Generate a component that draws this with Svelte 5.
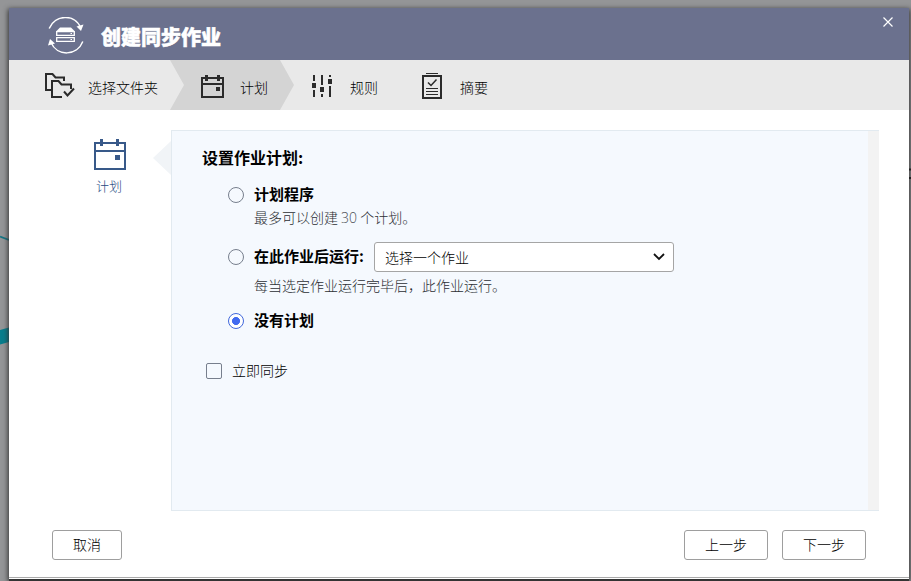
<script>
  const steps = [
    { id: "folder", label: "选择文件夹" },
    { id: "schedule", label: "计划" },
    { id: "rules", label: "规则" },
    { id: "summary", label: "摘要" }
  ];

  let current = "schedule";
  let plan = "none";
  let job = "";
  let syncNow = false;
</script>

<div class="desktop">
  <svg class="backdrop" width="9" height="581" viewBox="0 0 9 581">
    <path d="M0 236.500L9 240" stroke="#157584" stroke-width="1.800" />
    <path d="M0 330L9 327.500V342L0 344.500Z" fill="#087d8c" />
  </svg>
  <svg class="backdrop right" width="2" height="581" viewBox="0 0 2 581">
    <path d="M0 169.500H2M0 178H2" stroke="#222" stroke-width="2" />
  </svg>

  <div class="dialog">
    <header>
      <svg class="logo" width="36" height="38" viewBox="0 0 36 38" fill="none">
        <path d="M1.200 11.500C7 -2.500 27 -3.500 32.500 10.500" stroke="#fff" stroke-width="1.500" />
        <path d="M34.800 24.500C29 39.500 9 39.500 3 25.500" stroke="#fff" stroke-width="1.500" />
        <path d="M28.500 9.500L35.500 7.500L33 14Z" fill="#fff" />
        <path d="M0 28.500L2 22L7 26.500Z" fill="#fff" />
        <path d="M8 14.500L12 10.500H23L27 14.500Z" fill="#fff" />
        <path d="M8.700 14.700H26.300V18.300H8.700ZM8.700 20.700H26.300V24.300H8.700Z" stroke="#fff" stroke-width="1.300" />
        <path d="M22.500 16.500H24M22.500 22.500H24" stroke="#fff" />
      </svg>
      <h1>创建同步作业</h1>
      <button class="close" aria-label="关闭">
        <svg width="10" height="10" viewBox="0 0 10 10">
          <path d="M.5 .5L9.500 9.500M9.500 .5L.5 9.500" stroke="#fff" stroke-width="1.200" />
        </svg>
      </button>
    </header>

    <nav>
      {#each steps as step}
        <div class="step {step.id}" class:active={step.id === current}>
          {#if step.id === "folder"}
            <svg width="32" height="28" viewBox="0 0 32 28" fill="none" stroke="#2b2b2b" stroke-width="2">
              <path d="M7 19H2V3H8.500L11.500 6.500H20V10" />
              <path d="M18 26H8V10H14.500L17.500 13.500H27V18" />
              <path d="M20 20.500L23.500 24.500L30 17.500" />
            </svg>
          {:else if step.id === "schedule"}
            <svg width="24" height="24" viewBox="0 0 24 24" fill="none" stroke="#2b2b2b" stroke-width="2">
              <path d="M1 4H22V23H1ZM1 10H22" />
              <path d="M5.500 1V7M17.500 1V7" stroke-width="3" />
              <path d="M15 13H19V17H15Z" fill="#2b2b2b" stroke="none" />
            </svg>
          {:else if step.id === "rules"}
            <svg width="20" height="24" viewBox="0 0 20 24" fill="#2b2b2b">
              <path d="M1 2H3V8H1ZM0 10H4V15H0ZM1 17H3V24H1ZM9 2H11V12H9ZM8 14H12V19H8ZM9 21H11V24H9ZM17 2H19V4H17ZM16 6H20V11H16ZM17 13H19V24H17Z" />
            </svg>
          {:else}
            <svg width="20" height="27" viewBox="0 0 20 27" fill="none" stroke="#2b2b2b">
              <path d="M4 1.500H16" />
              <path d="M1 4H19V26H1Z" stroke-width="2" />
              <path d="M6 10.500L9 13.500L14.500 7.500" stroke-width="1.500" />
              <path d="M4 16.500H16M4 19.500H16M4 22.500H16" />
            </svg>
          {/if}
          <span>{step.label}</span>
        </div>
      {/each}
    </nav>

    <main>
      <aside>
        <svg width="32" height="32" viewBox="0 0 32 32" fill="none" stroke="#385989" stroke-width="2">
          <path d="M1 4H31V30H1ZM1 12H31" />
          <path d="M7.500 0V7M23.500 0V7" stroke-width="3" />
          <path d="M21 16H26V21H21Z" fill="#385989" stroke="none" />
        </svg>
        <span>计划</span>
      </aside>
      <div class="pointer"></div>

      <section>
        <div class="content">
          <h2>设置作业计划:</h2>

          <label class="option">
            <input type="radio" bind:group={plan} value="schedule" />
            <span>计划程序</span>
          </label>
          <p class="first_hint">最多可以创建 <span>30</span> 个计划。</p>

          <div class="after_job">
            <label class="option">
              <input type="radio" bind:group={plan} value="after" />
              <span>在此作业后运行:</span>
            </label>
            <div class="select_box">
              <select bind:value={job} aria-label="选择一个作业">
                <option value="">选择一个作业</option>
              </select>
              <svg width="12" height="8" viewBox="0 0 12 8" fill="none">
                <path d="M1 1L6 6L11 1" stroke="#111" stroke-width="1.800" />
              </svg>
            </div>
          </div>
          <p class="job_hint">每当选定作业运行完毕后，此作业运行。</p>

          <label class="option">
            <input type="radio" bind:group={plan} value="none" />
            <span>没有计划</span>
          </label>

          <label class="sync">
            <input type="checkbox" bind:checked={syncNow} />
            <span>立即同步</span>
          </label>
        </div>
        <div class="gutter"></div>
      </section>
    </main>

    <footer>
      <button class="btn cancel">取消</button>
      <button class="btn">上一步</button>
      <button class="btn">下一步</button>
    </footer>
  </div>
</div>

<style>
  :global(body) {
    margin: 0;
    overflow: hidden;
  }

  * {
    box-sizing: border-box;
  }

  .desktop {
    position: relative;
    width: 911px;
    height: 581px;
    padding: 8px 2px 0 9px;
    overflow: hidden;
    background: #949597;
    font-family: "Noto Sans CJK SC", sans-serif;
    font-weight: 300;
    font-size: 14px;
    color: #000;
  }

  .backdrop {
    position: absolute;
    left: 0;
    top: 0;
  }

  .backdrop.right {
    left: 909px;
    z-index: 1;
  }

  .dialog {
    position: relative;
    display: flex;
    flex-direction: column;
    width: 900px;
    height: 571px;
    background: #fff;
    border-bottom: 1px solid #fff;
    box-shadow: 0 2px 5px 1px #333, 0 3px 0 #3b3b3b;
  }

  header {
    display: flex;
    height: 52px;
    padding-left: 39px;
    background: #6b718e;
  }

  .logo {
    margin-top: 9px;
  }

  h1 {
    margin: 0 0 0 17px;
    font-size: 20px;
    line-height: 58px;
    font-weight: 900;
    -webkit-text-stroke: .5px #fff;
    color: #fff;
  }

  .close {
    width: 22px;
    height: 22px;
    margin: 3px 10px 0 auto;
    padding: 0;
    border: 0;
    background: none;
    line-height: 0;
  }

  nav {
    display: flex;
    height: 50px;
    flex: none;
    background: #e9e9e9;
  }

  .step {
    display: flex;
    align-items: center;
  }

  .step span {
    padding-top: 3px;
  }

  .folder {
    width: 161px;
    padding-left: 35px;
    gap: 12px;
  }

  .schedule {
    width: 124px;
    padding-left: 31px;
    margin-right: -14px;
    gap: 15px;
  }

  .schedule svg {
    margin-top: 2px;
  }

  .step.active {
    background: #d4d4d4;
    clip-path: polygon(0 0, 110px 0, 100% 50%, 110px 100%, 0 100%, 14px 50%);
  }

  .rules {
    width: 110px;
    padding-left: 32px;
    gap: 18px;
  }

  .summary {
    padding-left: 32px;
    gap: 18px;
  }

  main {
    display: flex;
    height: 401px;
    padding-top: 20px;
  }

  aside {
    display: flex;
    flex-direction: column;
    align-items: flex-start;
    width: 144px;
    padding: 9px 0 0 85px;
    color: #274a82;
    font-size: 13px;
  }

  aside span {
    line-height: 20px;
    margin: 5px 0 0 2px;
  }

  .pointer {
    width: 18px;
    height: 34px;
    margin-top: 11px;
    background: #f1f4f7;
    clip-path: polygon(100% 0, 100% 100%, 0 50%);
  }

  section {
    display: flex;
    width: 708px;
    height: 381px;
    border: 1px solid #e2eaf0;
    border-right: 0;
    background: #f5f9fe;
  }

  .content {
    flex: 1;
    padding: 14px 0 0 30px;
  }

  .gutter {
    width: 11px;
    background: #f3f3f3;
  }

  h2 {
    margin: 0 0 15px;
    font-size: 16px;
    line-height: 24px;
    font-weight: 700;
  }

  .option {
    display: flex;
    align-items: center;
    height: 22px;
    margin-left: 26px;
    gap: 10px;
    font-size: 15px;
    font-weight: 700;
  }

  .option span,
  .sync span {
    padding-bottom: 3px;
  }

  input {
    appearance: none;
    width: 16px;
    height: 16px;
    margin: 0;
    flex: none;
    border: 1px solid #777f8d;
    background: transparent;
  }

  input[type="radio"] {
    border-radius: 50%;
  }

  input[type="radio"]:checked {
    border-color: #4168dc;
    background: radial-gradient(circle, #416af0 0 3.700px, #fff 4.300px);
  }

  input[type="checkbox"] {
    border-radius: 2px;
  }

  p {
    margin: 0 0 0 52px;
    line-height: 20px;
    color: #2c2f34;
  }

  p span {
    font-family: "Open Sans", sans-serif;
    line-height: 1;
    color: #4c5056;
  }

  .first_hint {
    margin-top: 1px;
  }

  .after_job {
    display: flex;
    align-items: center;
    height: 30px;
    margin-top: 15px;
    gap: 10px;
  }

  .select_box {
    display: grid;
    align-items: center;
    width: 300px;
    height: 30px;
  }

  .select_box > * {
    grid-area: 1 / 1;
  }

  .select_box svg {
    justify-self: end;
    margin-right: 9px;
    pointer-events: none;
  }

  select {
    appearance: none;
    width: 300px;
    height: 30px;
    padding: 0 10px 1px;
    border: 1px solid #a5a5a5;
    border-radius: 3px;
    background: #fff;
    color: #000;
    font: inherit;
  }

  .job_hint {
    margin-top: 3px;
    margin-bottom: 15px;
  }

  .sync {
    display: flex;
    align-items: center;
    height: 22px;
    margin: 28px 0 0 4px;
    gap: 10px;
  }

  footer {
    display: flex;
    height: 67px;
    padding: 19px 43px 0;
    gap: 14px;
    border-bottom: 1px solid #aaa;
  }

  .btn {
    width: 84px;
    height: 30px;
    padding: 0 0 2px;
    border: 1px solid #9e9e9e;
    border-radius: 3px;
    background: #fff;
    color: #000;
    font: inherit;
  }

  .cancel {
    width: 70px;
    margin-right: auto;
  }
</style>
